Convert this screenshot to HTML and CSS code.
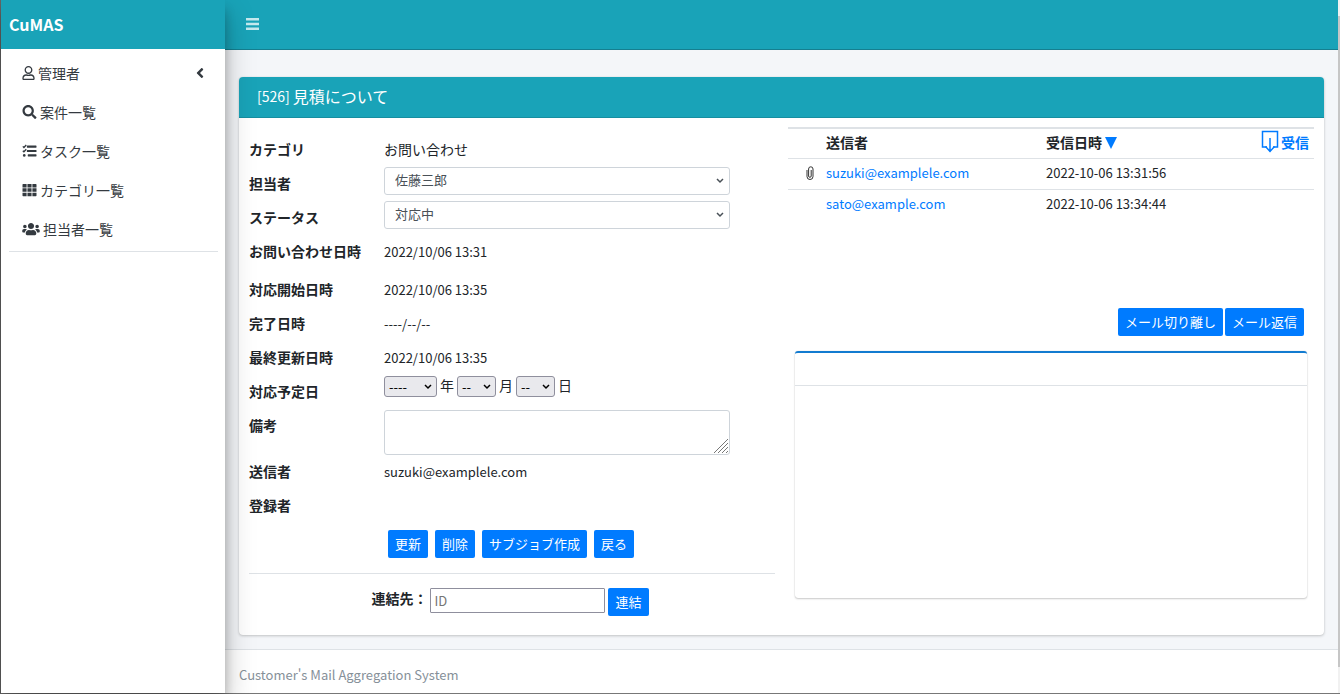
FILE: index.html
```html
<!DOCTYPE html>
<html lang="ja">
<head>
<meta charset="utf-8">
<title>CuMAS</title>
<link rel="stylesheet" href="styles.css">
</head>
<body>
<div class="app">
  <aside class="sidebar">
    <a class="brand" href="#">CuMAS</a>
    <nav class="menu">
      <a class="menu-item" href="#">
        <svg class="icon icon-user" viewBox="0 0 448 512"><path d="M313.6 304c-28.7 0-42.5 16-89.6 16-47.1 0-60.8-16-89.6-16C60.2 304 0 364.2 0 438.4V464c0 26.5 21.5 48 48 48h352c26.5 0 48-21.5 48-48v-25.6c0-74.2-60.2-134.4-134.4-134.4zM400 464H48v-25.6c0-47.6 38.8-86.4 86.4-86.4 14.6 0 38.3 16 89.6 16 51.7 0 74.9-16 89.6-16 47.6 0 86.4 38.8 86.4 86.4V464zM224 288c79.5 0 144-64.5 144-144S303.5 0 224 0 80 64.5 80 144s64.5 144 144 144zm0-240c52.9 0 96 43.1 96 96s-43.1 96-96 96-96-43.1-96-96 43.1-96 96-96z"/></svg>
        <span>管理者</span>
        <svg class="icon icon-angle" viewBox="0 0 256 512"><path d="M31.7 239l136-136c9.4-9.4 24.6-9.4 33.9 0l22.6 22.6c9.4 9.4 9.4 24.6 0 33.9L127.9 256l96.4 96.4c9.4 9.4 9.4 24.6 0 33.9L201.7 409c-9.4 9.4-24.6 9.4-33.9 0l-136-136c-9.5-9.4-9.5-24.6-.1-34z"/></svg>
      </a>
      <a class="menu-item" href="#">
        <svg class="icon" viewBox="0 0 512 512"><path d="M505 442.7L405.3 343c-4.5-4.5-10.6-7-17-7H372c27.6-35.3 44-79.7 44-128C416 93.1 322.9 0 208 0S0 93.1 0 208s93.1 208 208 208c48.3 0 92.7-16.4 128-44v16.3c0 6.4 2.5 12.5 7 17l99.7 99.7c9.4 9.4 24.6 9.4 33.9 0l28.3-28.3c9.4-9.4 9.4-24.6.1-34zM208 336c-70.7 0-128-57.2-128-128 0-70.7 57.2-128 128-128 70.7 0 128 57.2 128 128 0 70.7-57.2 128-128 128z"/></svg>
        <span>案件一覧</span>
      </a>
      <a class="menu-item" href="#">
        <svg class="icon" viewBox="0 0 512 512"><path d="M176 56h320q16 0 16 16v48q0 16-16 16H176q-16 0-16-16V72q0-16 16-16zM176 216h320q16 0 16 16v48q0 16-16 16H176q-16 0-16-16v-48q0-16 16-16zM208 376h288q16 0 16 16v48q0 16-16 16H208q-16 0-16-16v-48q0-16 16-16z"/><circle cx="64" cy="416" r="48"/><path class="tick" d="M12 86l40 40 86-92M12 246l40 40 86-92"/></svg>
        <span>タスク一覧</span>
      </a>
      <a class="menu-item" href="#">
        <svg class="icon" viewBox="0 0 512 512"><path d="M0 56q0-24 24-24h126v128H0zM181 32h150v128H181zM362 32h126q24 0 24 24v104H362zM0 192h150v128H0zM181 192h150v128H181zM362 192h150v128H362zM0 352h150v128H24q-24 0-24-24zM181 352h150v128H181zM362 352h150v104q0 24-24 24H362z"/></svg>
        <span>カテゴリ一覧</span>
      </a>
      <a class="menu-item" href="#">
        <svg class="icon icon-users" viewBox="0 0 640 512"><path d="M96 224c35.3 0 64-28.7 64-64s-28.7-64-64-64-64 28.7-64 64 28.7 64 64 64zm448 0c35.3 0 64-28.7 64-64s-28.7-64-64-64-64 28.7-64 64 28.7 64 64 64zm32 32h-64c-17.6 0-33.5 7.1-45.1 18.6 40.3 22.1 68.9 62 75.1 109.4h66c17.7 0 32-14.3 32-32v-32c0-35.3-28.7-64-64-64zm-256 0c61.9 0 112-50.1 112-112S381.9 32 320 32 208 82.1 208 144s50.1 112 112 112zm76.8 32h-8.3c-20.8 10-43.9 16-68.5 16s-47.6-6-68.5-16h-8.3C179.6 288 128 339.6 128 403.2V432c0 26.5 21.5 48 48 48h288c26.5 0 48-21.5 48-48v-28.8c0-63.6-51.6-115.2-115.2-115.2zm-223.7-13.4C161.5 263.1 145.6 256 128 256H64c-35.3 0-64 28.7-64 64v32c0 17.7 14.3 32 32 32h65.9c6.3-47.4 34.9-87.3 75.2-109.4z"/></svg>
        <span>担当者一覧</span>
      </a>
    </nav>
  </aside>

  <div class="page">
    <header class="topbar">
      <button class="toggle" type="button" aria-label="メニュー">
        <svg viewBox="0 0 13 12"><path d="M0 0h13v2.600H0zM0 4.700h13v2.600H0zM0 9.400h13v2.600H0z"/></svg>
      </button>
    </header>

    <main class="content">
      <section class="card">
        <h1 class="card-title"><span class="case-no">[526]</span><span>見積について</span></h1>
        <div class="card-body">
          <div class="detail">
            <form class="fields">
              <div class="row"><span class="label">カテゴリ</span><span class="value value-lg">お問い合わせ</span></div>
              <div class="row"><label class="label" for="staff">担当者</label><select class="control" id="staff"><option>佐藤三郎</option></select></div>
              <div class="row"><label class="label" for="status">ステータス</label><select class="control" id="status"><option>対応中</option></select></div>
              <div class="row row-wide"><span class="label">お問い合わせ日時</span><span class="value">2022/10/06 13:31</span></div>
              <div class="row"><span class="label">対応開始日時</span><span class="value">2022/10/06 13:35</span></div>
              <div class="row"><span class="label">完了日時</span><span class="value">----/--/--</span></div>
              <div class="row"><span class="label">最終更新日時</span><span class="value">2022/10/06 13:35</span></div>
              <div class="row"><span class="label">対応予定日</span>
                <div class="date">
                  <select class="mini mini-year" id="year" aria-label="年"><option>----</option></select><label for="year">年</label>
                  <select class="mini" id="month" aria-label="月"><option>--</option></select><label for="month">月</label>
                  <select class="mini" id="day" aria-label="日"><option>--</option></select><label for="day">日</label>
                </div>
              </div>
              <div class="row"><label class="label" for="note">備考</label><textarea class="note" id="note"></textarea></div>
              <div class="row"><span class="label">送信者</span><span class="value">suzuki@examplele.com</span></div>
              <div class="row"><span class="label">登録者</span><span class="value"></span></div>
            </form>
            <div class="actions">
              <button class="btn" type="button">更新</button>
              <button class="btn" type="button">削除</button>
              <button class="btn" type="button">サブジョブ作成</button>
              <button class="btn" type="button">戻る</button>
            </div>
            <form class="link-form">
              <label class="link-label" for="link-id">連結先：</label>
              <input class="link-input" id="link-id" type="text" placeholder="ID">
              <button class="btn" type="button">連結</button>
            </form>
          </div>

          <div class="mails">
            <div class="mail-list">
              <table class="mail-table">
                <thead>
                  <tr>
                    <th class="col-clip"></th>
                    <th class="col-from">送信者</th>
                    <th>受信日時 <a class="sort" href="#" aria-label="並べ替え"><svg viewBox="0 0 12 12"><path d="M0 0h12L6 12z"/></svg></a></th>
                    <th class="col-receive"><a class="receive" href="#"><svg viewBox="0 0 18 24"><path d="M6 17H1.500V1.500H16.500V17H12"/><path d="M9 8v14M4.500 16.500L9 21.500l4.500-5"/></svg>受信</a></th>
                  </tr>
                </thead>
                <tbody>
                  <tr>
                    <td class="clip"><svg viewBox="0 0 8 14"><path d="M1 4v6.500a3 3 0 0 0 6 0V3a2.200 2.200 0 0 0-4.400 0v7a1.300 1.300 0 0 0 2.600 0V4"/></svg></td>
                    <td><a href="#">suzuki@examplele.com</a></td>
                    <td colspan="2">2022-10-06 13:31:56</td>
                  </tr>
                  <tr>
                    <td></td>
                    <td><a href="#">sato@example.com</a></td>
                    <td colspan="2">2022-10-06 13:34:44</td>
                  </tr>
                </tbody>
              </table>
            </div>
            <div class="mail-actions">
              <button class="btn" type="button">メール切り離し</button>
              <button class="btn" type="button">メール返信</button>
            </div>
            <article class="viewer"><div class="viewer-head"></div></article>
          </div>
        </div>
      </section>
    </main>

    <footer class="footer">Customer's Mail Aggregation System</footer>
  </div>
  <div class="scroll-edge"></div>
</div>
</body>
</html>
```

FILE: styles.css
```css
* { box-sizing: border-box; }

body {
  margin: 0;
  background: #fff;
  color: #212529;
  font-family: "Noto Sans CJK JP", sans-serif;
  font-size: 13px;
  line-height: 20px;
}

a { color: #007bff; text-decoration: none; }
button, input, select, textarea { font: inherit; }

.app {
  display: flex;
  min-height: calc(100vh - 1px);
  border-left: 1px solid #666;
  border-bottom: 1px solid #777;
}

/* Sidebar */
.sidebar {
  z-index: 1;
  flex: 0 0 224px;
  background: #fff;
  box-shadow: 0 14px 28px rgba(0, 0, 0, .25), 0 10px 10px rgba(0, 0, 0, .22);
}

.brand {
  display: flex;
  align-items: center;
  height: 49px;
  padding: 0 8px 2px;
  background: #19a3b8;
  color: #fff;
  font-size: 16px;
  font-weight: 700;
}

.menu {
  margin: 0 7px 0 8px;
  padding: 4px 0 3px;
  border-bottom: 1px solid #dee2e6;
}

.menu-item {
  display: flex;
  align-items: center;
  gap: 3px;
  height: 39px;
  padding: 0 14px 0 13px;
  color: #343a40;
  font-size: 14px;
}

.icon { width: 15px; height: 14px; fill: #343a40; }
.icon-user { width: 13px; }
.icon-users { width: 18px; }
.icon-angle { width: 8px; height: 16px; margin-left: auto; }
.tick { fill: none; stroke: #343a40; stroke-width: 48; }

/* Page frame */
.page {
  display: flex;
  flex: 1;
  flex-direction: column;
  min-width: 0;
  background: #f4f6f9;
}

.topbar {
  display: flex;
  align-items: center;
  height: 50px;
  padding: 0 21px 1px;
  border-bottom: 1px solid #157f90;
  background: #19a3b8;
}

.toggle {
  display: flex;
  padding: 0;
  border: 0;
  background: none;
}

.toggle svg { width: 13px; height: 12px; fill: #c5e9ee; }

.content { flex: 1; padding: 27px 14px 14px; }

.footer {
  padding: 15px 14px 8px;
  border-top: 1px solid #dee2e6;
  background: #fff;
  color: #869099;
}

.scroll-edge {
  flex: 0 0 2px;
  background: linear-gradient(#f1f1f1 16px, #c6c6c6 16px calc(100% - 26px), #f1f1f1 calc(100% - 26px));
}

/* Case card */
.card {
  overflow: hidden;
  border-radius: 4px;
  background: #fff;
  box-shadow: 0 0 1px rgba(0, 0, 0, .13), 0 1px 3px rgba(0, 0, 0, .2);
}

.card-title {
  display: flex;
  align-items: center;
  gap: 3px;
  margin: 0;
  padding: 9px 18px 11px;
  border-bottom: 1px solid #168ea0;
  background: #19a3b8;
  color: #fff;
  font-size: 16px;
  font-weight: 400;
}

.case-no { font-size: 14px; }

.card-body {
  display: grid;
  grid-template-columns: 1fr 1fr;
  gap: 13px;
  padding: 9px 10px 19px;
}

.detail { padding-top: 6px; }

.row {
  display: grid;
  grid-template-columns: 135px 1fr;
  align-items: start;
  min-height: 34px;
  padding-right: 45px;
}

.row-wide { min-height: 38px; }

.label { padding-top: 6px; font-size: 14px; font-weight: 700; }
.value { padding-top: 7px; }
.value-lg { padding-top: 6px; font-size: 14px; }

.control {
  width: 100%;
  height: 28px;
  padding: 0 10px 2px;
  border: 1px solid #ced4da;
  border-radius: 3px;
  appearance: none;
  background: #fff url("data:image/svg+xml,%3Csvg xmlns='http://www.w3.org/2000/svg' width='8' height='6'%3E%3Cpath d='M1 1l3 3 3-3' fill='none' stroke='%23495057' stroke-width='1.500'/%3E%3C/svg%3E") no-repeat right 5px center;
  color: #495057;
}

.date {
  display: flex;
  align-items: center;
  gap: 3px;
  padding-top: 1px;
  font-size: 14px;
  line-height: 18px;
}

.date label { padding-bottom: 3px; }

.mini {
  width: 39px;
  height: 21px;
  padding: 0 4px;
  border: 1px solid #8f8f9d;
  border-radius: 3px;
  appearance: none;
  background: #e9e9ed url("data:image/svg+xml,%3Csvg xmlns='http://www.w3.org/2000/svg' width='8' height='6'%3E%3Cpath d='M1 1l3 3 3-3' fill='none' stroke='%23000' stroke-width='1.500'/%3E%3C/svg%3E") no-repeat right 4px center;
  color: #000;
  font-size: 13px;
}

.mini-year { width: 53px; }

.note {
  display: block;
  width: 100%;
  height: 45px;
  margin-top: 1px;
  border: 1px solid #ced4da;
  border-radius: 3px;
}

.note::-webkit-resizer {
  background: url("data:image/svg+xml,%3Csvg xmlns='http://www.w3.org/2000/svg' width='15' height='15'%3E%3Cpath d='M0 14L14 0M4 14L14 4M8 14l6-6M12 14l2-2' stroke='%23777' stroke-width='1'/%3E%3C/svg%3E") no-repeat right bottom;
}

/* Buttons */
.btn {
  height: 28px;
  padding: 0 7px;
  border: 0;
  border-radius: 2px;
  background: #007bff;
  color: #fff;
}

.actions {
  display: flex;
  gap: 7px;
  padding: 7px 0 15px 139px;
  border-bottom: 1px solid #dee2e6;
}

.link-form {
  display: flex;
  justify-content: center;
  gap: 3px;
  padding: 14px 4px 0 0;
}

.link-label { font-size: 14px; font-weight: 700; }

.link-input {
  width: 175px;
  height: 25px;
  padding: 0 3px;
  border: 1px solid #8f8f9d;
  border-radius: 1px;
}

/* Mail list */
.mail-list { min-height: 181px; }

.mail-table {
  width: 100%;
  border-collapse: collapse;
  table-layout: fixed;
}

.mail-table th {
  height: 30px;
  padding: 0 0 2px;
  border-top: 2px solid #dee2e6;
  font-size: 14px;
  text-align: left;
}

.mail-table td { height: 31px; padding: 0 0 1px; border-top: 1px solid #dee2e6; }
.mail-table .col-clip { width: 38px; }
.mail-table .col-from { width: 220px; }
.mail-table .col-receive { padding-right: 5px; }

.sort svg { width: 12px; height: 12px; fill: #007bff; vertical-align: -1px; }

.receive {
  display: flex;
  align-items: center;
  justify-content: flex-end;
  gap: 2px;
}

.receive svg { width: 18px; height: 24px; fill: none; stroke: #007bff; stroke-width: 1.500; }

.clip svg {
  display: block;
  width: 8px;
  height: 14px;
  margin-left: 18px;
  fill: none;
  stroke: #333;
  stroke-width: 1;
}

.mail-actions {
  display: flex;
  justify-content: flex-end;
  gap: 2px;
  padding-right: 10px;
}

.viewer {
  height: 247px;
  margin: 15px 7px 0;
  border-top: 2px solid #127bd0;
  border-radius: 3px;
  box-shadow: 0 0 1px rgba(0, 0, 0, .2), 0 1px 2px rgba(0, 0, 0, .2);
}

.viewer-head { height: 33px; border-bottom: 1px solid #dee2e6; }
```
